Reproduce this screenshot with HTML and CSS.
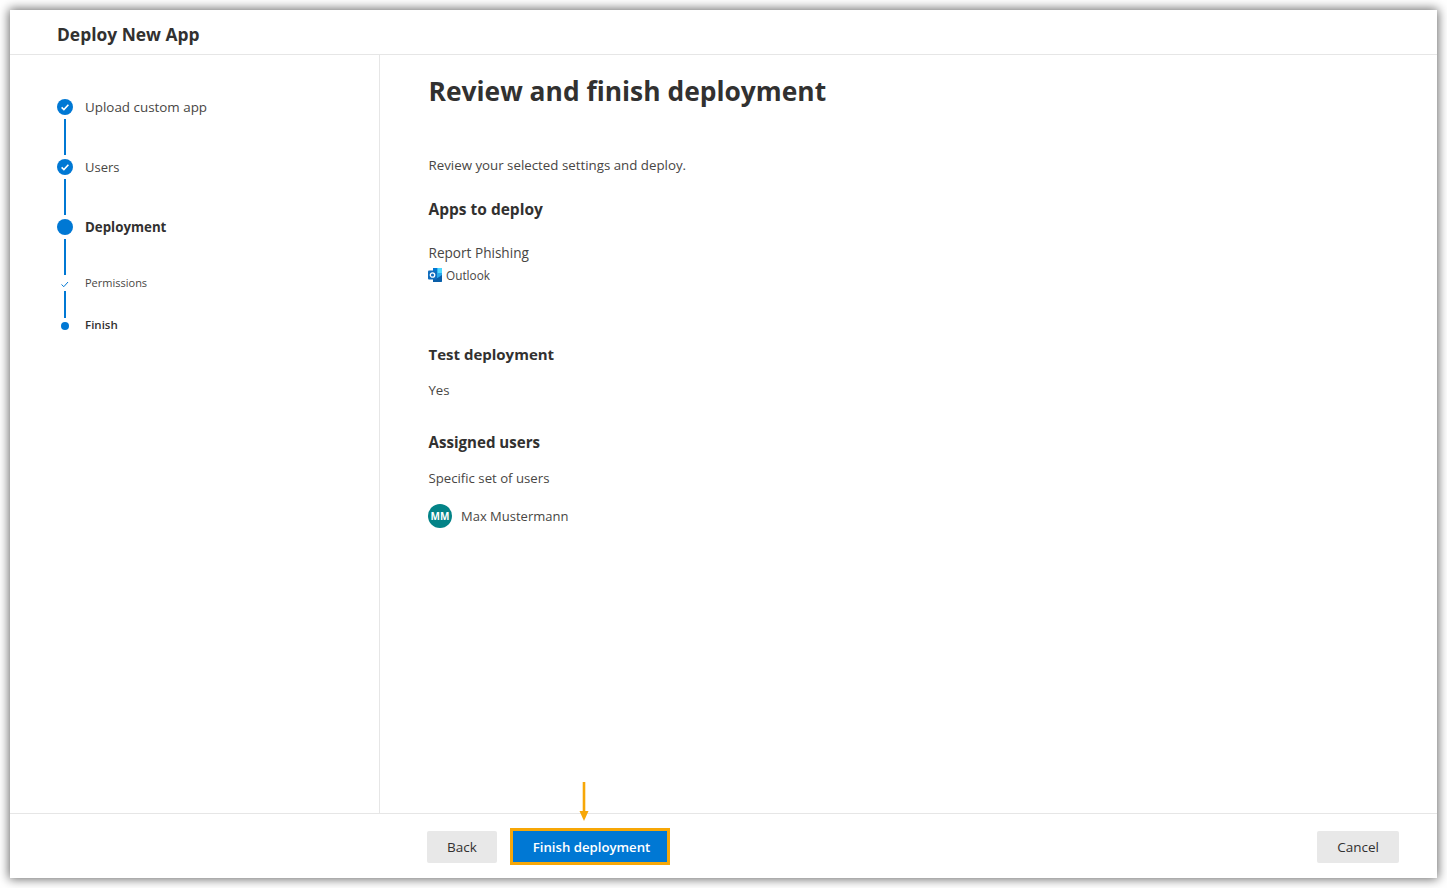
FILE: index.html
```html
<!DOCTYPE html>
<html>

<head>
    <title>Deploy New App</title>
    <link rel="stylesheet" href="styles.css">
</head>

<body>
    <div class="panel">
        <header class="panel-header">Deploy New App</header>

        <div class="panel-body">
            <nav class="steps">
                <div class="step">
                    <span class="step-icon">
                        <svg width="16" height="16" viewBox="0 0 16 16">
                            <circle cx="8" cy="8" r="8" fill="#0078d4" />
                            <path d="M4.6 8.3l2.3 2.2 4.5-4.8" fill="none" stroke="#fff" stroke-width="1.6" />
                        </svg>
                    </span>
                    <span class="step-label">Upload custom app</span>
                </div>
                <div class="step-line"></div>
                <div class="step">
                    <span class="step-icon">
                        <svg width="16" height="16" viewBox="0 0 16 16">
                            <circle cx="8" cy="8" r="8" fill="#0078d4" />
                            <path d="M4.6 8.3l2.3 2.2 4.5-4.8" fill="none" stroke="#fff" stroke-width="1.6" />
                        </svg>
                    </span>
                    <span class="step-label step-label-users">Users</span>
                </div>
                <div class="step-line"></div>
                <div class="step">
                    <span class="step-icon">
                        <svg width="16" height="16" viewBox="0 0 16 16">
                            <circle cx="8" cy="8" r="8" fill="#0078d4" />
                        </svg>
                    </span>
                    <span class="step-label step-current">Deployment</span>
                </div>
                <div class="step-line step-line-before-sub"></div>
                <div class="step step-sub">
                    <span class="step-icon">
                        <svg width="16" height="16" viewBox="0 0 16 16">
                            <path d="M4.500 8.500l2.300 2.200 4.200-4.700" fill="none" stroke="#0078d4" stroke-width="1" />
                        </svg>
                    </span>
                    <span class="step-label step-label-up">Permissions</span>
                </div>
                <div class="step-line step-line-short"></div>
                <div class="step step-sub">
                    <span class="step-icon">
                        <svg width="16" height="16" viewBox="0 0 16 16">
                            <circle cx="8" cy="8" r="4" fill="#0078d4" />
                        </svg>
                    </span>
                    <span class="step-label step-finish">Finish</span>
                </div>
            </nav>

            <main class="review">
                <h1>Review and finish deployment</h1>
                <p class="intro">Review your selected settings and deploy.</p>

                <h2>Apps to deploy</h2>
                <div class="app-name">Report Phishing</div>
                <div class="app-host">
                    <svg width="14" height="14" viewBox="0 0 14 14">
                        <path d="M5 0h8a1 1 0 0 1 1 1v12a1 1 0 0 1-1 1H5z" fill="#28a8ea" />
                        <path d="M5 0h4.500v5H5z" fill="#0078d4" />
                        <path d="M9.500 0H13a1 1 0 0 1 1 1v4H9.500z" fill="#50d9ff" />
                        <path d="M5 7l4.500 3L14 7v6a1 1 0 0 1-1 1H5z" fill="#0a5ea8" />
                        <rect x="0" y="2.500" width="9" height="9" rx="1" fill="#0f6cbd" />
                        <circle cx="4.500" cy="7" r="2.200" fill="none" stroke="#fff" stroke-width="1.300" />
                    </svg>
                    <span>Outlook</span>
                </div>

                <h2 class="heading-test">Test deployment</h2>
                <p class="value">Yes</p>

                <h2 class="heading-users">Assigned users</h2>
                <p class="value">Specific set of users</p>
                <div class="user">
                    <span class="avatar">MM</span>
                    <span>Max Mustermann</span>
                </div>
            </main>
        </div>

        <footer class="panel-footer">
            <button type="button" class="btn">Back</button>
            <div class="finish-wrap">
                <svg class="finish-arrow" width="10" height="40" viewBox="0 0 10 40">
                    <path d="M5 0v32" stroke="#f7a707" stroke-width="2.600" />
                    <path d="M0.500 29h9L5 39z" fill="#f7a707" />
                </svg>
                <button type="button" class="btn btn-primary">Finish deployment</button>
            </div>
            <button type="button" class="btn btn-cancel">Cancel</button>
        </footer>
    </div>
</body>

</html>
```

FILE: styles.css
```css
html,
body {
    height: 100%;
}

body {
    margin: 0;
    padding: 10px;
    box-sizing: border-box;
    background-color: #fff;
    font-family: "Open Sans", "Noto Sans", Arial, sans-serif;
    color: #323130;
    overflow: hidden;
}

.panel {
    height: 868px;
    background-color: #fff;
    box-shadow: 0 0 10px 1px rgba(0, 0, 0, 0.6);
    display: flex;
    flex-direction: column;
}

.panel-header {
    height: 44px;
    padding-left: 47px;
    border-bottom: 1px solid #e6e6e6;
    font-size: 17.400px;
    font-weight: 700;
    line-height: 49px;
}

.panel-body {
    flex: 1;
    display: flex;
    min-height: 0;
}

.steps {
    width: 322px;
    padding: 44px 0 0 47px;
    border-right: 1px solid #e6e6e6;
}

.step {
    display: flex;
    align-items: center;
    height: 16px;
    font-size: 13.4px;
}

.step-icon {
    width: 16px;
    height: 16px;
    flex: none;
    margin-right: 12px;
}

.step-icon svg {
    display: block;
}

.step-label {
    white-space: nowrap;
    color: #484644;
}

.step-label-users {
    font-size: 13px;
}

.step-current {
    font-size: 13.300px;
    font-weight: 700;
    color: #323130;
}

.step-finish {
    font-size: 11.5px;
    font-weight: 600;
    margin-top: -3px;
    color: #323130;
}

.step-label-up {
    font-size: 11px;
    margin-top: -4px;
}

.step-line {
    width: 2px;
    height: 36px;
    margin: 4px 0 4px 7px;
    background-color: #0078d4;
}

.step-line-before-sub {
    margin-bottom: 1px;
}

.step-line-short {
    height: 27px;
    margin-top: -1px;
    margin-bottom: 0;
}

.review {
    flex: 1;
    padding-left: 48.500px;
}

h1 {
    margin: 19px 0 0;
    font-size: 26.400px;
    font-weight: 700;
    line-height: 34px;
}

.intro {
    margin: 47px 0 0;
    font-size: 13.3px;
    line-height: 20px;
    color: #484644;
}

h2 {
    margin: 0;
    font-size: 15.5px;
    font-weight: 700;
    line-height: 22px;
}

.intro+h2 {
    margin-top: 23px;
}

.app-name {
    margin-top: 23px;
    font-size: 13.6px;
    font-weight: 500;
    line-height: 20px;
    color: #484644;
}

.app-host {
    display: flex;
    align-items: center;
    gap: 4px;
    margin-top: 2px;
    margin-left: -0.500px;
    font-size: 11.8px;
    line-height: 20px;
    color: #484644;
}

.heading-test {
    margin-top: 58px;
    font-size: 15px;
}

.heading-users {
    margin-top: 31px;
    font-size: 15.100px;
}

.value {
    margin: 15px 0 0;
    font-size: 13.200px;
    line-height: 20px;
    color: #484644;
}

.user {
    display: flex;
    align-items: center;
    gap: 9px;
    margin-top: 16px;
    margin-left: -0.500px;
    font-size: 13px;
    color: #484644;
}

.avatar {
    width: 24px;
    height: 24px;
    border-radius: 50%;
    background-color: #038387;
    color: #fff;
    font-size: 10px;
    font-weight: 700;
    line-height: 24px;
    text-align: center;
}

.panel-footer {
    height: 65px;
    box-sizing: border-box;
    border-top: 1px solid #e6e6e6;
    padding: 17px 38px 0 417px;
    display: flex;
    align-items: flex-start;
}

.btn {
    height: 32px;
    padding: 0;
    width: 70px;
    border: none;
    border-radius: 2px;
    background-color: #e8e8e8;
    color: #323130;
    font-family: inherit;
    font-size: 13.5px;
    font-weight: 500;
}

.finish-wrap {
    position: relative;
    margin-left: 13px;
}

.btn-primary {
    display: block;
    height: 31px;
    padding-left: 3px;
    box-sizing: content-box;
    width: 151px;
    border: 3px solid #f7a707;
    border-radius: 0;
    margin-top: -3px;
    background-color: #0078d4;
    color: #fff;
    font-size: 13.2px;
    font-weight: 600;
}

.finish-arrow {
    position: absolute;
    left: 69px;
    top: -49px;
}

.btn-cancel {
    width: 82px;
    margin-left: auto;
}
```
